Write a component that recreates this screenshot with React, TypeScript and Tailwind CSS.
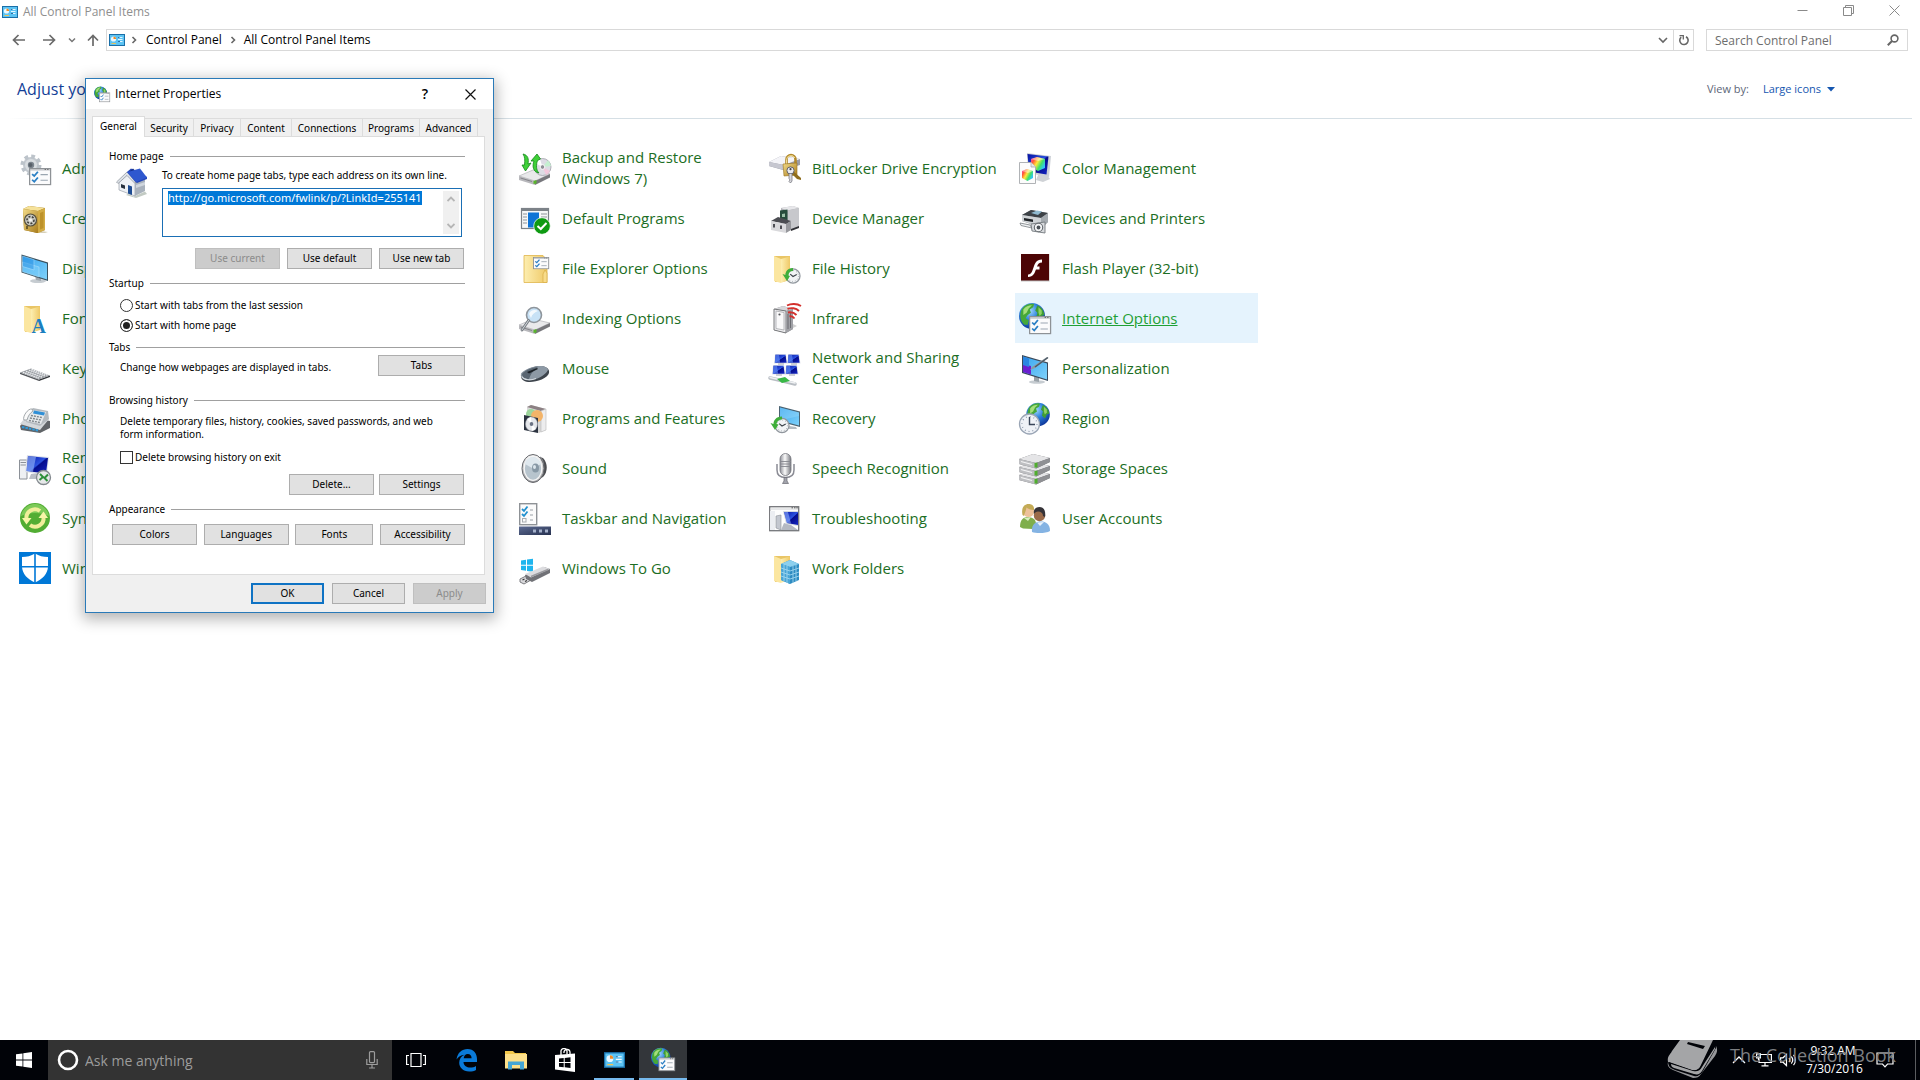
import { useEffect, useRef } from "react";
import type { ReactNode } from "react";

/* ---------- shared gradients ---------- */

function Gradients() {
  return (
    <svg width="0" height="0" className="absolute" aria-hidden="true">
      <defs>
        <linearGradient id="folder" x1="0" y1="0" x2="1" y2="0">
          <stop offset="0" stopColor="#fdeeb0" />
          <stop offset="1" stopColor="#efc967" />
        </linearGradient>
        <linearGradient id="screen" x1="0" y1="0" x2="1" y2="1">
          <stop offset="0" stopColor="#38a4ee" />
          <stop offset="1" stopColor="#7fd2fb" />
        </linearGradient>
        <linearGradient id="navy" x1="0" y1="0" x2="1" y2="1">
          <stop offset="0" stopColor="#0510a0" />
          <stop offset="0.5" stopColor="#2b52e0" />
          <stop offset="0.55" stopColor="#040c8c" />
          <stop offset="1" stopColor="#1526c4" />
        </linearGradient>
        <radialGradient id="globe" cx="0.4" cy="0.3" r="0.75">
          <stop offset="0" stopColor="#a9dcff" />
          <stop offset="0.45" stopColor="#2f83dc" />
          <stop offset="1" stopColor="#0a2f94" />
        </radialGradient>
        <linearGradient id="metal" x1="0" y1="0" x2="0" y2="1">
          <stop offset="0" stopColor="#f4f4f4" />
          <stop offset="1" stopColor="#9b9b9f" />
        </linearGradient>
        <linearGradient id="steel" x1="0" y1="0" x2="1" y2="0">
          <stop offset="0" stopColor="#8f9098" />
          <stop offset="0.45" stopColor="#fafafa" />
          <stop offset="1" stopColor="#77787f" />
        </linearGradient>
        <linearGradient id="gold" x1="0" y1="0" x2="1" y2="1">
          <stop offset="0" stopColor="#f3dc8a" />
          <stop offset="1" stopColor="#a97c1c" />
        </linearGradient>
        <linearGradient id="rainbow" x1="0" y1="0" x2="1" y2="0.6">
          <stop offset="0" stopColor="#ff3bd0" />
          <stop offset="0.25" stopColor="#ff5a36" />
          <stop offset="0.5" stopColor="#ffe83a" />
          <stop offset="0.75" stopColor="#3fe06a" />
          <stop offset="1" stopColor="#2fc4ff" />
        </linearGradient>
        <linearGradient id="bar" x1="0" y1="0" x2="1" y2="1">
          <stop offset="0" stopColor="#5d6c93" />
          <stop offset="1" stopColor="#26304f" />
        </linearGradient>
      </defs>
    </svg>
  );
}

/* ---------- icon building blocks ---------- */

function Svg({ children, size = "size-8" }: { children: ReactNode; size?: string }) {
  return (
    <svg viewBox="0 0 32 32" className={`${size} shrink-0 overflow-visible`} aria-hidden="true">
      {children}
    </svg>
  );
}

function Globe({ cx, cy, r }: { cx: number; cy: number; r: number }) {
  return (
    <g transform={`translate(${cx} ${cy}) scale(${r / 12})`}>
      <circle r="12" fill="url(#globe)" />
      <path d="M-9 -7C-6 -11 -1 -12 2 -11L1 -8L-2 -6L-1 -3L-4 -1L-6 2L-3 4L-4 8L-7 8C-11 5 -12 -2 -9 -7Z" fill="#46a838" />
      <path d="M-8 -6C-6 -9 -3 -10 0 -10L-3 -7L-5 -3L-8 -1Z" fill="#a5df7c" />
      <path d="M5 -10C9 -8 11 -5 11.5 -1L9 0L7 4L4 1L5 -3L3 -5Z" fill="#3f9c35" />
      <path d="M6 -8L9 -5L9 -2L7 0L6 -3Z" fill="#8fd264" />
    </g>
  );
}

function CheckSheet({ x, y, w = 21, h = 18 }: { x: number; y: number; w?: number; h?: number }) {
  return (
    <g transform={`translate(${x} ${y}) scale(${w / 21} ${h / 18})`}>
      <rect x="0.6" y="0.6" width="20" height="17" fill="#fbfbfc" stroke="#8e9296" strokeWidth="1.2" />
      <path d="M1 2H20" stroke="#a9adb1" strokeWidth="1" />
      <path d="M15 1.6h1M17.500 1.600h1" stroke="#555" />
      <path d="M3 6.500L5 8.500L8.500 4M3 12.500L5 14.500L8.500 10" fill="none" stroke="#2a7fc4" strokeWidth="1.700" />
      <path d="M11 7H18M11 13H18" stroke="#9ba6b1" strokeWidth="1.200" />
    </g>
  );
}

function OpenFolder() {
  return (
    <g>
      <path d="M5 4H21V28L14 30H6Z" fill="#e9c566" />
      <path d="M5 4L12 7V31L5 29Z" fill="#fbe6a0" />
      <path d="M12 7L21 4.500V27L12 31Z" fill="url(#folder)" />
    </g>
  );
}

function Clock({ cx, cy, r }: { cx: number; cy: number; r: number }) {
  return (
    <g transform={`translate(${cx} ${cy}) scale(${r / 8})`}>
      <circle r="7.500" fill="#f2f4f6" stroke="#90969d" strokeWidth="1.300" />
      <circle r="5.800" fill="none" stroke="#8b9299" strokeWidth="1" strokeDasharray="0.800 2.200" />
      <path d="M-3 -2L0 0.500L4 -1.500" fill="none" stroke="#3c4249" strokeWidth="1.200" />
    </g>
  );
}

function Drive({ y = 0 }: { y?: number }) {
  return (
    <g transform={`translate(0 ${y})`}>
      <path d="M0 24L14 18L31 22L16 29Z" fill="#e9e9eb" stroke="#a8a8ac" strokeWidth="0.600" />
      <path d="M0 24L16 29V33L0 28Z" fill="#b8b8bc" />
      <path d="M16 29L31 22V25.500L16 33Z" fill="#77777c" />
      <path d="M1.500 26L13 29.500" stroke="#85858a" strokeWidth="1" />
      <path d="M14.500 29L17.500 28V31.500L14.500 32Z" fill="#58b52a" />
    </g>
  );
}

function MiniMonitor({ x, y }: { x: number; y: number }) {
  return (
    <g transform={`translate(${x} ${y})`}>
      <path d="M1 0H12L13.500 9.500H0Z" fill="#dfe2ea" />
      <path d="M1.500 0.800H11.500L12.600 8.700H0.800Z" fill="url(#navy)" />
      <path d="M1.500 0.800L5 0.800L6 8.700H0.800Z" fill="#5b86f2" opacity="0.700" />
      <path d="M4 10H10" stroke="#b9bcc5" strokeWidth="1.400" />
    </g>
  );
}

/* ---------- control panel item icons ---------- */

const icons: Record<string, ReactNode> = {
  admin: (
    <Svg>
      <g transform="translate(12 13)">
        <circle r="8" fill="#c3c9cf" />
        <circle r="8.500" fill="none" stroke="#bcc3ca" strokeWidth="4" strokeDasharray="3.600 3.070" />
        <circle r="6" fill="#d9dde1" />
        <circle r="3.200" fill="#7b848d" />
        <circle cx="-0.500" r="2" fill="#586069" />
      </g>
      <CheckSheet x={10} y={16} w={22} h={17} />
    </Svg>
  ),
  credential: (
    <Svg>
      <path d="M22 29L29 30L26 31H18Z" fill="#d6cfb8" />
      <path d="M4 7L10 4L26 6V28L18 31L5 28Z" fill="#9a7216" />
      <path d="M4 7L10 4L26 6L19 9Z" fill="#f6e29a" />
      <path d="M4 7L19 9V31L5 28Z" fill="url(#gold)" />
      <path d="M19 9L26 6V28L19 31Z" fill="#d3ac45" />
      <path d="M21 11L24.500 9.500V26L21 27.500Z" fill="#bd922b" />
      <circle cx="11.500" cy="18" r="6" fill="#c9c9c2" stroke="#55503e" strokeWidth="1.200" />
      <circle cx="11.500" cy="18" r="3.500" fill="none" stroke="#3d3d3a" strokeWidth="1.500" strokeDasharray="2 1.500" />
      <circle cx="11.500" cy="18" r="1.500" fill="#f7f7f4" />
      <path d="M8 24V27" stroke="#52451e" strokeWidth="1.500" />
    </Svg>
  ),
  display: (
    <Svg>
      <ellipse cx="19" cy="29" rx="8" ry="2" fill="#c6ccd1" />
      <path d="M16 24L22 26V29L17 28Z" fill="#a2aab1" />
      <path d="M2.500 2.500L29 10.500V29L2.500 20.500Z" fill="#39515f" />
      <path d="M3.500 4L28 11.500V27.500L3.500 19.700Z" fill="url(#screen)" />
      <path d="M3.500 10L20 15V25L3.500 19.700Z" fill="#7fd0fb" opacity="0.550" stroke="#c9edff" strokeWidth="0.800" />
      <path d="M3.500 4L15 7.500V18L3.500 14.500Z" fill="#2f94e4" opacity="0.500" stroke="#bfe6ff" strokeWidth="0.800" />
    </Svg>
  ),
  fonts: (
    <Svg>
      <OpenFolder />
      <text x="12.500" y="30.500" fontSize="20" fontWeight="700" fontFamily="'Liberation Serif', serif" fill="#1b7fc0">
        A
      </text>
    </Svg>
  ),
  keyboard: (
    <Svg>
      <path d="M1 20.500L20 27.500V29L1 22Z" fill="#55585c" />
      <path d="M20 27.500L31 23.500V25L20 29Z" fill="#33363a" />
      <path d="M1 20.500L12 16.500L31 23.500L20 27.500Z" fill="#9a9ea3" />
      <path d="M4 20.300L20.500 26.300M7 19.300L23.500 25.200M10 18.200L26.500 24.200M12.500 17.300L29 23.300" stroke="#eceef0" strokeWidth="1.300" strokeDasharray="1.600 0.600" />
    </Svg>
  ),
  phone: (
    <Svg>
      <path d="M1 24L9 14L31 19V26L21 31L2 28Z" fill="#606468" />
      <path d="M1 22L9 12L30 17L21 28Z" fill="#d4d8db" />
      <path d="M9 10L14 6L29 9L30 17L21 24L7 20Z" fill="#b4babf" />
      <path d="M12 8L27 10L22 22L7 19Z" fill="#e4e8ea" />
      <path d="M15 8.500L26 10.500L25 13.500L14 11.500Z" fill="#2f8fd6" />
      <path d="M12 13.500L23 15.500M11 16L22 18M10 18.500L21 20.500" stroke="#7d8489" strokeWidth="1.400" strokeDasharray="2 1" />
      <path d="M5 18C3 15 9 6 13 7L14 9C11 11 9 14 8 18Z" fill="#fafafa" stroke="#8e9499" strokeWidth="0.800" />
      <path d="M3 25L19 28.500" stroke="#2f9bdc" strokeWidth="2.200" strokeDasharray="2.500 1" />
    </Svg>
  ),
  remote: (
    <Svg>
      <path d="M0.500 8H8V27H0.500Z" fill="#eef0f3" stroke="#8c9198" strokeWidth="1" />
      <path d="M1.500 10.500H7M1.500 13H7" stroke="#8c9198" />
      <path d="M12 22L18 21L19 27L10 27Z" fill="#b9bec7" />
      <path d="M8 3L30 5L28 23L6 20Z" fill="#dfe3ea" />
      <path d="M9 4L29 6L27 21.500L7.500 19Z" fill="url(#navy)" />
      <path d="M9 4L17 5L14 19.800L7.500 19Z" fill="#8fb0f8" opacity="0.650" />
      <circle cx="24.500" cy="25.500" r="7" fill="#e6e8e9" stroke="#83898e" strokeWidth="1.300" />
      <path d="M21 22L24 25L20.500 28M29 22.500L25.500 26L28.500 29" fill="none" stroke="#2f8f3a" strokeWidth="2" />
    </Svg>
  ),
  sync: (
    <Svg>
      <circle cx="16" cy="16" r="15" fill="#52ad33" />
      <path d="M2 14C4 5 11 2 16 2S28 5 30 14C22 10 10 10 2 14Z" fill="#7cca58" />
      <path d="M7.500 17A8.500 8.500 0 0 1 21 9" fill="none" stroke="#f0ee9a" strokeWidth="4" />
      <path d="M24.500 15A8.500 8.500 0 0 1 11 23" fill="none" stroke="#f0ee9a" strokeWidth="4" />
      <path d="M3 16H12.500L7.500 22.500Z" fill="#f7f5a8" />
      <path d="M19.500 16H29L24.500 9.500Z" fill="#f7f5a8" />
    </Svg>
  ),
  defender: (
    <Svg>
      <rect width="32" height="32" fill="#0078d7" />
      <path d="M16 1.500C12 4 8 5 3 5V14C3 22 9 27.500 16 30.500C23 27.500 29 22 29 14V5C24 5 20 4 16 1.500Z" fill="#fff" />
      <path d="M16 1V31M2 14.800H30" stroke="#0078d7" strokeWidth="1.600" />
    </Svg>
  ),
  backup: (
    <Svg>
      <Drive />
      <circle cx="23.500" cy="15" r="8.500" fill="#dcdce4" stroke="#9fa0a8" strokeWidth="0.800" />
      <path d="M23.500 15L16 11A8.500 8.500 0 0 1 21 7Z" fill="#fff" />
      <path d="M23.500 15L31 19A8.500 8.500 0 0 1 27 23Z" fill="#f2c8dc" />
      <path d="M23.500 15L32 14A8.500 8.500 0 0 0 29 8.500Z" fill="#c4f0d0" />
      <circle cx="23.500" cy="15" r="2.300" fill="#8e8f96" stroke="#fff" strokeWidth="0.900" />
      <path d="M4 2C9 3 10 7 9 12L12 11L6.500 19L3 13L5.500 13C6 8 6 5 4 2Z" fill="#3fd038" stroke="#14861a" strokeWidth="0.800" />
      <path d="M20 21C14 20 13 14 15 9L12 9L18 2L21.500 7L18.500 8.500C17 13 17 18 20 21Z" fill="#3fd038" stroke="#14861a" strokeWidth="0.800" />
    </Svg>
  ),
  defaults: (
    <Svg>
      <rect x="2.500" y="6.500" width="27" height="20" fill="#f6f7f8" stroke="#7c8288" strokeWidth="1.200" />
      <path d="M2.500 8H29.500" stroke="#7c8288" strokeWidth="2" />
      <path d="M4 12H8M4 15H8M4 18H8M4 21H8M22 12H28M22 15H28" stroke="#8d9399" strokeWidth="1" />
      <rect x="9" y="10.500" width="11" height="15" fill="#0f74d6" />
      <circle cx="23" cy="24" r="8.300" fill="#0e9a12" stroke="#fff" strokeWidth="0.700" />
      <path d="M18.500 24L21.800 27L27.500 21" fill="none" stroke="#fff" strokeWidth="2" />
    </Svg>
  ),
  explorerOptions: (
    <Svg>
      <path d="M5 3.500H24L28 8V30.500H5Z" fill="url(#folder)" stroke="#dfb54b" strokeWidth="0.800" />
      <path d="M24 30.500V22L26 18L28 21V30.500Z" fill="#f8dc8b" stroke="#d9ad45" strokeWidth="0.700" />
      <CheckSheet x={14} y={5} w={16} h={12} />
    </Svg>
  ),
  indexing: (
    <Svg>
      <Drive y={-1} />
      <circle cx="15" cy="13" r="7.500" fill="#c8e2f6" stroke="#8e959c" strokeWidth="1.600" />
      <path d="M10 12C11 8 16 7 19 9C16 10 13 12 12 16Z" fill="#fff" opacity="0.800" />
      <path d="M9.500 18.500L3 28" stroke="#777d84" strokeWidth="2.800" strokeLinecap="round" />
      <path d="M9.500 18.500L3 28" stroke="#d3d7da" strokeWidth="1" strokeLinecap="round" />
    </Svg>
  ),
  mouse: (
    <Svg>
      <path d="M2 24C1 20 14 14 21 14C27 14 31 17 30 21C29 26 18 30 11 30C6 30 2 28 2 24Z" fill="#3d444c" />
      <path d="M2 23C1 19 14 14 21 14C26 14 29 16 29 18C26 24 17 28 11 28C6 28 2 26 2 23Z" fill="#8d99a5" />
      <path d="M3 22C6 18 14 15 19 15C15 18 12 21 10 27C6 27 3 25 3 22Z" fill="#5a6672" />
      <path d="M8 20L18 16L19 17L10 21.500Z" fill="#1c2228" />
      <path d="M2.500 24.500C5 28.500 12 28.500 17 26.500" fill="none" stroke="#d6dce1" strokeWidth="1.200" />
    </Svg>
  ),
  programs: (
    <Svg>
      <path d="M8 5L12 3L27 7V28L20 31L8 28Z" fill="#d8d8d8" />
      <path d="M8 5L12 3L27 7L22 9Z" fill="#8c8083" />
      <path d="M22 9L27 7V28L22 30Z" fill="#ededee" stroke="#bbb" strokeWidth="0.600" />
      <circle cx="12" cy="12" r="5" fill="#9dd69c" />
      <circle cx="18" cy="14" r="6" fill="#f3b469" />
      <path d="M5 13L19 16V31L5 28Z" fill="#2c3340" />
      <ellipse cx="12.500" cy="22" rx="6" ry="7" fill="#e6e8ec" stroke="#9da1aa" strokeWidth="0.600" />
      <path d="M12.500 22L8 17L12 15ZM12.500 22L17 27L13 29Z" fill="#fff" />
      <ellipse cx="12.500" cy="22" rx="1.800" ry="2.100" fill="#6b7383" />
    </Svg>
  ),
  sound: (
    <Svg>
      <path d="M13 3L24 6C29 11 29 20 24 25L14 30Z" fill="#4b4c50" />
      <path d="M21 5C26 10 26 20 21 26" fill="none" stroke="#7c7e83" strokeWidth="1.200" />
      <ellipse cx="14" cy="16.500" rx="11" ry="14" fill="url(#metal)" stroke="#66686c" strokeWidth="1" />
      <ellipse cx="14" cy="16.500" rx="8.800" ry="11.800" fill="#b7c4cd" stroke="#f5f5f5" strokeWidth="1.300" />
      <path d="M14 16.500L6 12C7 7 10 5 14 5C18 5 21 8 22 12Z" fill="#dfe8ee" />
      <ellipse cx="16.500" cy="16" rx="3.500" ry="4.500" fill="#8798a5" />
      <ellipse cx="15.500" cy="15" rx="1.500" ry="2" fill="#dbe5ec" />
    </Svg>
  ),
  taskbar: (
    <Svg>
      <rect x="0.700" y="1.700" width="17" height="21" fill="#fbfbfb" stroke="#8e9296" strokeWidth="1.400" />
      <path d="M3 7L5 9L8.500 4.500M3 12L5 14L8.500 9.500" fill="none" stroke="#2391cf" strokeWidth="1.800" />
      <rect x="3.500" y="16.500" width="3.500" height="3.500" fill="none" stroke="#a9adb1" />
      <path d="M11 8H14M11 13H14M11 18H14" stroke="#9ba1a7" />
      <rect y="24.500" width="32" height="8.500" fill="url(#bar)" />
      <path d="M14 27.500h3v3h-3zM20 27.500h3v3h-3zM26 27.500h3v3h-3z" fill="#a5b1cb" />
    </Svg>
  ),
  togo: (
    <Svg>
      <path d="M2 8.500L7 7.800V12.700H2ZM8 7.600L14 6.700V12.700H8ZM2 13.700H7V18.700L2 18ZM8 13.700H14V19.700L8 18.900Z" fill="#1fb5ee" />
      <path d="M1 27L7 24L12 28L5 32L1 30Z" fill="#d9d9dc" stroke="#6f7074" strokeWidth="0.900" />
      <path d="M3.500 28L5.500 27M6 29.500L8 28.500" stroke="#333" strokeWidth="1.200" />
      <path d="M6 23L25 15L31 17V21L13 30L7 27Z" fill="#717277" />
      <path d="M6 22L24 14.500L31 17L12 25.500Z" fill="#dcdcdf" />
      <path d="M12 24.500L29 17.500" stroke="#9a9a9f" strokeWidth="1.500" />
    </Svg>
  ),
  bitlocker: (
    <Svg>
      <path d="M0 10L12 4L31 7V13L14 18L0 14Z" fill="#9b9ca6" />
      <path d="M0 10L12 4L31 7L15 13Z" fill="#f4f4f8" />
      <path d="M0 10L15 13V18L0 14Z" fill="#c6c7d0" />
      <path d="M17.500 12V7.500A4.500 4.500 0 0 1 26.500 7.500V12" fill="none" stroke="#b2892c" strokeWidth="2.600" />
      <path d="M17.500 12V7.500A4.500 4.500 0 0 1 26 6" fill="none" stroke="#f0dc94" strokeWidth="1" />
      <path d="M14 12L28 11V23L15 24Z" fill="url(#gold)" stroke="#98701c" strokeWidth="0.600" />
      <path d="M24 19L32 26V28L28 27L23 22Z" fill="#8e6c1c" />
      <circle cx="21.500" cy="18.500" r="3.600" fill="#ececf0" stroke="#62636a" strokeWidth="1" />
      <circle cx="21.500" cy="17.200" r="1.100" fill="#45464c" />
      <path d="M20 21.500H23V29L21.500 31L20 29.500L21 28L20 26.500Z" fill="#d8d8dd" stroke="#6a6b72" strokeWidth="0.700" />
    </Svg>
  ),
  device: (
    <Svg>
      <path d="M12 6L24 4L30 6V25L16 30L12 25Z" fill="#b1b2b7" />
      <path d="M12 6L24 4L30 6L18 8.500Z" fill="#e7e7ea" />
      <path d="M19 8.500L30 6V25L19 28Z" fill="#c7c8cc" />
      <path d="M22 27L30 24V26L22 29Z" fill="#303136" />
      <path d="M11 8.500L18.500 7.500V19L11 18Z" fill="#274d3c" />
      <path d="M13 12L16 11.500V15L13 15Z" fill="#9cc0a8" />
      <path d="M2 19L9 15L22 19L17 22Z" fill="#4b4c52" />
      <path d="M2 19L17 22V31L2 28Z" fill="#d9d9dc" />
      <path d="M17 22L22 19V28L17 31Z" fill="#96979c" />
      <path d="M5 22V25.500M12 23.500V27" stroke="#4d4e54" strokeWidth="2" />
    </Svg>
  ),
  history: (
    <Svg>
      <OpenFolder />
      <Clock cx={24} cy={24} r={7.500} />
      <path d="M24 16C18 16 16.500 20 16.500 23L13.500 22L18 29L21 24L19.500 23.500C19.500 21 21 19 24 19Z" fill="#3fae3a" />
    </Svg>
  ),
  infrared: (
    <Svg>
      <path d="M22 27L28 24L24 22Z" fill="#d0d0d0" />
      <path d="M5 7L14 4L24 7V27L17 31L5 28Z" fill="#85868a" />
      <path d="M5 7L14 4L24 7L17 9Z" fill="#d7d7da" />
      <path d="M5 7L17 9V31L5 28Z" fill="#ececee" stroke="#6c6d71" strokeWidth="0.900" />
      <path d="M7 9L15 10.500V28L7 26.500Z" fill="#f9f9fa" stroke="#a7a8ac" strokeWidth="0.800" />
      <path d="M17 9L24 7V27L17 31Z" fill="#a0a1a6" />
      <path d="M19 27V12M21.500 26V11" stroke="#6c6d72" />
      <circle cx="10.500" cy="12.500" r="1.100" fill="#57585c" />
      <path d="M18 3.500C22 1.500 28 1.500 32 4M18.500 7C22 5.500 27 6 30 9M19 10.500C22 10 25 10.500 27.500 13M20.500 14.500C22 14 24 14.500 25.500 16.500" fill="none" stroke="#d3302c" strokeWidth="1.900" />
    </Svg>
  ),
  network: (
    <Svg>
      <MiniMonitor x={5} y={2} />
      <MiniMonitor x={18} y={2} />
      <MiniMonitor x={3} y={13} />
      <MiniMonitor x={16} y={13} />
      <path d="M1 26L12 28.500L26 32" stroke="#b9bec4" strokeWidth="3.500" strokeLinecap="round" />
      <path d="M1 25.500L12 28L26 31" stroke="#eff1f3" strokeWidth="1.400" strokeLinecap="round" />
      <path d="M8 27L16 25L21 29L13 31Z" fill="#39b846" />
    </Svg>
  ),
  recovery: (
    <Svg>
      <path d="M20 24L27 25L28 27H19Z" fill="#b5bcc2" />
      <path d="M10 4L31 9.500V25L10 19.500Z" fill="#4b6372" />
      <path d="M11 5.500L30 10.500V23.500L11 18.500Z" fill="url(#screen)" />
      <path d="M11 5.500L30 10.500V14L11 18.500Z" fill="#a6dffb" opacity="0.350" />
      <Clock cx={13} cy={23.500} r={7.500} />
      <path d="M13 14.500C6.500 14.500 4.500 19 4.500 22L1.500 21L6 28L9.500 22.500L7.500 22C8 19 10 17.500 13 17.500Z" fill="#3fae3a" />
    </Svg>
  ),
  speech: (
    <Svg>
      <path d="M8 12V18C8 23 11 25.500 16.500 25.500S25 23 25 18V12" fill="none" stroke="#8b8c95" strokeWidth="1.500" />
      <rect x="11" y="1.500" width="11" height="22" rx="5.500" fill="url(#steel)" stroke="#75767e" strokeWidth="0.800" />
      <path d="M11 9.500H22M11 12H22M11 14.500H22" stroke="#86878f" strokeWidth="0.900" />
      <path d="M15 25.500H18V29L19.500 31.500H13.500L15 29Z" fill="#a3a4ac" stroke="#696a72" strokeWidth="0.700" />
    </Svg>
  ),
  troubleshooting: (
    <Svg>
      <rect x="0.700" y="4.700" width="29" height="24" fill="#fdfdfd" stroke="#74767a" strokeWidth="1.300" />
      <path d="M1 7H29" stroke="#d0d2d5" />
      <path d="M22.500 5.800h1.500M25 5.800h1.500M27.300 5.800h1.500" stroke="#555" />
      <path d="M1 9H6V28H1Z" fill="#eceef2" />
      <path d="M7 14L12 13V28L7 26Z" fill="#c3c7cf" stroke="#8b9099" strokeWidth="0.600" />
      <path d="M15 21L22 23L29 28H12Z" fill="#b4b9c2" />
      <path d="M14 9H29V24L17 22Z" fill="#d5dae2" />
      <path d="M15 10H29V23L18 21Z" fill="url(#navy)" />
      <path d="M15 10L19 10L22 21.500L18 21Z" fill="#7d9cf5" opacity="0.700" />
    </Svg>
  ),
  work: (
    <Svg>
      <OpenFolder />
      <path d="M12 12L21 8L30 12V28L21 32L12 28Z" fill="#2f8cc2" />
      <path d="M12 12L21 8L30 12L21 15Z" fill="#8dd0ee" />
      <path d="M12 12L21 15V32L12 28Z" fill="#49a5d6" />
      <path d="M12 16L21 19L30 16M12 20L21 23L30 20M12 24L21 27L30 24M15 13V29.500M18 14V31M24 14V31M27 13V29.500" fill="none" stroke="#a8dcf3" strokeWidth="0.800" />
    </Svg>
  ),
  color: (
    <Svg>
      <path d="M19 23H28L31 27L24 30L17 28Z" fill="#cfd2d6" />
      <path d="M8 1L32 4L30 25L9 21Z" fill="#cdd1d7" />
      <path d="M8.500 2L29.500 4.500L27.500 22.500L10 19.500Z" fill="url(#navy)" />
      <path d="M12 7L18 5L26 7V16L19 19L12 15Z" fill="url(#rainbow)" />
      <path d="M12 7L18 5L26 7L19 9Z" fill="#fff" opacity="0.450" />
      <path d="M0.500 10.500H12L16.500 15V31.500H0.500Z" fill="#fcfcfc" stroke="#a7aaae" strokeWidth="0.900" />
      <path d="M12 10.500V15H16.500" fill="#e5e7e9" stroke="#a7aaae" strokeWidth="0.800" />
      <path d="M3 19L8 17L14 19V26L8.500 29L3 26Z" fill="url(#rainbow)" />
      <path d="M3 19L8 17L14 19L9 21Z" fill="#fff" opacity="0.450" />
    </Svg>
  ),
  printers: (
    <Svg>
      <path d="M3 13L12 8L29 11V20L23 26L3 19Z" fill="#8f959a" />
      <path d="M3 13L12 8L29 11L22 16Z" fill="#3c4146" />
      <path d="M12 11L18 8.500L23 9.500L19 13Z" fill="#8fb9cf" />
      <path d="M3 13L22 16V25L3 19Z" fill="#cfd3d6" />
      <path d="M5 16L14 17.500V20L5 18.500Z" fill="#22262a" />
      <path d="M1 21L11 23L13 26L2 23.500Z" fill="#eef0f2" stroke="#777d82" strokeWidth="0.800" />
      <path d="M22 16L29 11V20L22 25Z" fill="#a5abb0" />
      <path d="M12 22L26 20V31L13 29Z" fill="#d7dadd" stroke="#74797e" strokeWidth="0.900" />
      <circle cx="19.500" cy="25.500" r="4.200" fill="#f4f5f6" stroke="#666b70" strokeWidth="1.100" />
      <circle cx="19.500" cy="25.500" r="1.900" fill="#4a5056" />
    </Svg>
  ),
  flash: (
    <Svg>
      <rect x="2" y="2" width="28.500" height="27.500" fill="#8c8c8c" opacity="0.500" />
      <rect x="2" y="2" width="28" height="26.500" fill="#4c0405" />
      <path d="M23 7.500C17 7.500 16 11.500 14.500 15.500C13 20 12 22.500 9 22.500V25C14.500 25 15.500 21 17 17.500H20.500V14.500H18C19 12 20 10.500 23 10.500Z" fill="#fff" />
    </Svg>
  ),
  internet: (
    <Svg>
      <Globe cx={13} cy={14} r={13} />
      <CheckSheet x={10} y={14} w={22} h={18} />
    </Svg>
  ),
  personalization: (
    <Svg>
      <ellipse cx="18" cy="30" rx="8" ry="1.800" fill="#c6ccd1" />
      <path d="M15 24L20 26V30L15 29Z" fill="#9aa2a9" />
      <path d="M3 3L29 10.500V29L3 21Z" fill="#3b4a5b" />
      <path d="M4 4.500L28 11.500V27.500L4 20Z" fill="url(#screen)" />
      <path d="M4 12L12 14V22.500L4 20Z" fill="#6b1fd0" />
      <path d="M4 4.500L10 6.500L10 15L4 13Z" fill="#2a86e2" />
      <path d="M29 6L16 16L11 18L13 15L28 5Z" fill="#8d98a2" />
      <path d="M29 5.500L16 15" stroke="#4d5964" strokeWidth="1.500" />
    </Svg>
  ),
  region: (
    <Svg>
      <Globe cx={19} cy={12.500} r={11.800} />
      <circle cx="10.500" cy="22" r="10" fill="#eff2f7" stroke="#9aa5b5" strokeWidth="1.300" />
      <circle cx="10.500" cy="22" r="7.500" fill="none" stroke="#76849a" strokeWidth="1.200" strokeDasharray="0.800 3.130" />
      <path d="M10.500 15V22.500H16" fill="none" stroke="#39465a" strokeWidth="1.400" />
    </Svg>
  ),
  storage: (
    <Svg>
      {[21, 13, 5].map((y) => (
        <g key={y} transform={`translate(0 ${y})`}>
          <path d="M0 2L14 -3L31 1V5L17 11.500L0 7Z" fill="#707175" />
          <path d="M0 2L14 -3L31 1L17 6Z" fill="#e5e5e7" />
          <path d="M0 2L17 6V11.500L0 7Z" fill="#bebfc2" />
          <path d="M2 4.500L13 7.500" stroke="#f4f4f5" strokeWidth="1.200" />
          <path d="M17 6L31 1V5L17 11.500Z" fill="#8f9094" />
          <path d="M15.500 6L18.500 5.500V10.300L15.500 10.700Z" fill="#4fae2d" />
        </g>
      ))}
    </Svg>
  ),
  users: (
    <Svg>
      <path d="M1 25C1 17 5 15 9 15S17 17 17 22L14 27L4 26.500Z" fill="#7fae4c" />
      <path d="M5 16L9 19L12 15Z" fill="#d9eec0" />
      <circle cx="9.500" cy="9.500" r="5.600" fill="#edc19a" />
      <path d="M3.500 13C2 6 5 2 9.500 2C14 2 15.500 5 15 8C12 8 9 7 7.500 5.500C7 9 5.500 11 5 14Z" fill="#c4ab57" />
      <path d="M13 30C12 22 17 19.500 22 19.500S31 22 31 29C27 31.500 17 31.500 13 30Z" fill="#84b3e3" />
      <path d="M18 20.500L21 24L25 20Z" fill="#e6f1fb" />
      <circle cx="20.500" cy="13.500" r="5.700" fill="#9b6b4a" />
      <path d="M15 12C14 7 17 5 20.500 5C25 5 27 9 26 15L24 14C24 11 22 9.500 19 9.500C17 9.500 16 10.500 15 12Z" fill="#363338" />
    </Svg>
  ),
};

function ControlPanelGlyph({ className }: { className: string }) {
  return (
    <svg viewBox="0 0 16 12" className={`${className} shrink-0`} aria-hidden="true">
      <rect x="0.500" y="0.500" width="15" height="11" fill="#5cc3f3" stroke="#1a6fa8" />
      <circle cx="4.500" cy="5" r="2.600" fill="#e9f7ff" />
      <path d="M4.500 5V2.400A2.600 2.600 0 0 1 7.100 5Z" fill="#f08a24" />
      <path d="M9 3.500H13.500M9 5.500H13.500M9 7.500H13.500" stroke="#f3fbff" strokeWidth="0.900" />
      <path d="M9 3.500H10.500M9 7.500H11" stroke="#1c5f96" strokeWidth="0.900" />
      <path d="M2.500 9.500H7" stroke="#f7c24c" strokeWidth="0.900" />
    </svg>
  );
}

function HouseIcon() {
  return (
    <svg viewBox="0 0 32 30" className="h-[30px] w-8 shrink-0" aria-hidden="true">
      <path d="M12 26L18 28.500L29 23.500L31 26L20 30L10 27Z" fill="#9aa79b" opacity="0.600" />
      <path d="M3 14L11 7L19 14V28L3 22Z" fill="#eef1f5" stroke="#8a929c" strokeWidth="0.600" />
      <path d="M19 14L29 11V23L19 28Z" fill="#a8b1bc" />
      <path d="M20 17L29 14V17L20 20Z" fill="#cfd6dd" />
      <path d="M0.500 14L11 4L20 14.500L18.500 15L11 7.500L2 15.500Z" fill="#dfe4ea" stroke="#7a828c" strokeWidth="0.600" />
      <path d="M11 4L15 0.500L31 9L31 11L21 15L19.500 14Z" fill="#2547b8" />
      <path d="M11 4L24 0.500L31 9.500L20 14Z" fill="#2f58cf" />
      <path d="M13.500 3.500L17 0.500L18.500 2Z" fill="#16308e" />
      <path d="M5 16L9 17.500V21L5 19.500Z" fill="#26303d" />
      <path d="M12 17L16 18.500V27L12 25.500Z" fill="#1e4c92" />
    </svg>
  );
}

/* ---------- control panel ---------- */

type Item = { name: string; icon: string; active?: boolean };

const columns: Item[][] = [
  [
    { name: "Administrative Tools", icon: "admin" },
    { name: "Credential Manager", icon: "credential" },
    { name: "Display", icon: "display" },
    { name: "Fonts", icon: "fonts" },
    { name: "Keyboard", icon: "keyboard" },
    { name: "Phone and Modem", icon: "phone" },
    { name: "RemoteApp and Desktop Connections", icon: "remote" },
    { name: "Sync Center", icon: "sync" },
    { name: "Windows Defender", icon: "defender" },
  ],
  [],
  [
    { name: "Backup and Restore (Windows 7)", icon: "backup" },
    { name: "Default Programs", icon: "defaults" },
    { name: "File Explorer Options", icon: "explorerOptions" },
    { name: "Indexing Options", icon: "indexing" },
    { name: "Mouse", icon: "mouse" },
    { name: "Programs and Features", icon: "programs" },
    { name: "Sound", icon: "sound" },
    { name: "Taskbar and Navigation", icon: "taskbar" },
    { name: "Windows To Go", icon: "togo" },
  ],
  [
    { name: "BitLocker Drive Encryption", icon: "bitlocker" },
    { name: "Device Manager", icon: "device" },
    { name: "File History", icon: "history" },
    { name: "Infrared", icon: "infrared" },
    { name: "Network and Sharing Center", icon: "network" },
    { name: "Recovery", icon: "recovery" },
    { name: "Speech Recognition", icon: "speech" },
    { name: "Troubleshooting", icon: "troubleshooting" },
    { name: "Work Folders", icon: "work" },
  ],
  [
    { name: "Color Management", icon: "color" },
    { name: "Devices and Printers", icon: "printers" },
    { name: "Flash Player (32-bit)", icon: "flash" },
    { name: "Internet Options", icon: "internet", active: true },
    { name: "Personalization", icon: "personalization" },
    { name: "Region", icon: "region" },
    { name: "Storage Spaces", icon: "storage" },
    { name: "User Accounts", icon: "users" },
  ],
];

function PanelItem({ item }: { item: Item }) {
  return (
    <li>
      <a
        href="#"
        className={`flex h-[50px] w-[243px] items-center gap-[11px] pl-1 text-[15px] leading-[21px] ${
          item.active ? "bg-[#e5f3fd] text-[#1fa035] underline" : "text-[#1c6e24]"
        }`}
      >
        {icons[item.icon]}
        <span>{item.name}</span>
      </a>
    </li>
  );
}

function TitleBar() {
  return (
    <header className="flex h-6 items-center pr-5 pl-0.5 text-xs text-[#8f8f8f]">
      <ControlPanelGlyph className="h-3 w-4" />
      <h1 className="ml-[5px] grow">All Control Panel Items</h1>
      <div className="flex gap-[35px] pb-1">
        <button aria-label="Minimize">
          <svg viewBox="0 0 11 11" className="size-[11px]">
            <path d="M0.500 5.500H10.500" stroke="#8a8a8a" />
          </svg>
        </button>
        <button aria-label="Restore">
          <svg viewBox="0 0 11 11" className="size-[11px]" fill="none" stroke="#8a8a8a">
            <path d="M0.500 2.500H8.500V10.500H0.500ZM2.500 2.500V0.500H10.500V8.500H8.500" />
          </svg>
        </button>
        <button aria-label="Close">
          <svg viewBox="0 0 11 11" className="size-[11px]" stroke="#8a8a8a">
            <path d="M0.500 0.500L10.500 10.500M10.500 0.500L0.500 10.500" />
          </svg>
        </button>
      </div>
    </header>
  );
}

function Chevron({ d }: { d: string }) {
  return (
    <svg viewBox="0 0 10 10" className="size-2.5 shrink-0" fill="none" stroke="#666" strokeWidth="1.600" aria-hidden="true">
      <path d={d} />
    </svg>
  );
}

function NavBar() {
  return (
    <nav className="mt-[5px] flex h-[22px] items-center pr-3 pl-3 text-xs text-black">
      <button aria-label="Back" className="mr-4">
        <svg viewBox="0 0 14 12" className="h-3 w-3.5" fill="none" stroke="#6a6a6a" strokeWidth="1.700">
          <path d="M13 6H1.500M6.500 1L1.500 6L6.500 11" />
        </svg>
      </button>
      <button aria-label="Forward" className="mr-3">
        <svg viewBox="0 0 14 12" className="h-3 w-3.5" fill="none" stroke="#6a6a6a" strokeWidth="1.700">
          <path d="M1 6H12.500M7.500 1L12.500 6L7.500 11" />
        </svg>
      </button>
      <button aria-label="Recent locations" className="mr-[11px]">
        <svg viewBox="0 0 8 8" className="size-2" fill="none" stroke="#777" strokeWidth="1.500">
          <path d="M1 2.500L4 5.500L7 2.500" />
        </svg>
      </button>
      <button aria-label="Up" className="mr-[7px]">
        <svg viewBox="0 0 12 12" className="size-3" fill="none" stroke="#6a6a6a" strokeWidth="1.700">
          <path d="M6 12V1.500M1 6.500L6 1.500L11 6.500" />
        </svg>
      </button>
      <div className="flex h-full grow items-center border border-[#d9d9d9]">
        <ControlPanelGlyph className="ml-0.5 h-3 w-4" />
        <span className="ml-1">
          <Chevron d="M3.500 2L6.500 5L3.500 8" />
        </span>
        <a href="#" className="ml-[7px]">Control Panel</a>
        <span className="ml-1.5">
          <Chevron d="M3.500 2L6.500 5L3.500 8" />
        </span>
        <a href="#" className="ml-1.5 grow">All Control Panel Items</a>
        <button aria-label="Previous locations" className="flex h-full w-5 items-center justify-center">
          <Chevron d="M1 3L5 7L9 3" />
        </button>
        <button aria-label="Refresh" className="flex h-full w-5 items-center justify-center border-l border-[#d9d9d9]">
          <svg viewBox="0 0 12 12" className="size-3" fill="none" stroke="#666" strokeWidth="1.600">
            <path d="M8 2.700A4.200 4.200 0 1 1 3.200 3.200" />
            <path d="M1.500 1.600H5.300V5.500" strokeWidth="1.300" />
          </svg>
        </button>
      </div>
      <label className="ml-3 flex h-full w-[202px] items-center border border-[#d9d9d9] px-2">
        <span className="sr-only">Search</span>
        <input
          type="text"
          placeholder="Search Control Panel"
          className="h-5 w-full min-w-0 outline-none placeholder:text-[#6d6d6d]"
        />
        <svg viewBox="0 0 12 12" className="size-3 shrink-0" fill="none" stroke="#666" strokeWidth="1.600" aria-hidden="true">
          <circle cx="7.500" cy="4.500" r="3.400" />
          <path d="M5 7L0.800 11.200" strokeWidth="2" />
        </svg>
      </label>
    </nav>
  );
}

/* ---------- Internet Properties dialog ---------- */

function GroupTitle({ children }: { children: string }) {
  return (
    <h3 className="flex h-4 items-center gap-1.5 after:h-px after:grow after:bg-[#a0a0a0]">{children}</h3>
  );
}

function DialogButton({
  children,
  width = "w-[85px]",
  disabled,
  primary,
}: {
  children: string;
  width?: string;
  disabled?: boolean;
  primary?: boolean;
}) {
  const tone = disabled
    ? "border border-[#bfbfbf] bg-[#cccccc] text-[#8b8b8b]"
    : primary
      ? "border-2 border-[#0f73c4] bg-[#e1e1e1]"
      : "border border-[#adadad] bg-[#e1e1e1]";
  return (
    <button disabled={disabled} className={`flex h-[21px] items-center justify-center ${width} ${tone}`}>
      {children}
    </button>
  );
}

const tabs = [
  { name: "Security", width: "w-[49px]" },
  { name: "Privacy", width: "w-[47px]" },
  { name: "Content", width: "w-[51px]" },
  { name: "Connections", width: "w-[71px]" },
  { name: "Programs", width: "w-[57px]" },
  { name: "Advanced", width: "w-[58px]" },
];

function InternetProperties() {
  const address = useRef<HTMLTextAreaElement>(null);
  useEffect(() => {
    address.current?.focus();
    address.current?.select();
  }, []);

  return (
    <section
      role="dialog"
      aria-label="Internet Properties"
      className="absolute top-[78px] left-[85px] w-[409px] border border-[#2a7ab8] bg-[#f0f0f0] pb-2 font-['Noto_Sans','Open_Sans',sans-serif] text-[10px] leading-[13px] text-black shadow-[0_4px_14px_2px_rgba(0,0,0,0.3)]"
    >
      <header className="flex h-[30px] items-center bg-white pr-[17px] pl-2 font-['Open_Sans','Noto_Sans',sans-serif] text-xs">
        <Svg size="size-4">
          <Globe cx={13} cy={14} r={13} />
          <CheckSheet x={10} y={13} w={22} h={19} />
        </Svg>
        <h2 className="ml-[5px] grow">Internet Properties</h2>
        <button aria-label="Help" className="mr-[37px] text-sm font-semibold">?</button>
        <button aria-label="Close">
          <svg viewBox="0 0 11 11" className="size-[11px]" stroke="#111" strokeWidth="1.200">
            <path d="M0.500 0.500L10.500 10.500M10.500 0.500L0.500 10.500" />
          </svg>
        </button>
      </header>

      <div className="pt-[7px] pr-2 pl-1.5">
        <div role="tablist" className="-mb-px flex items-end">
          <button
            role="tab"
            aria-selected="true"
            className="relative h-[21px] w-[53px] border border-b-0 border-[#dcdcdc] bg-white pb-0.5"
          >
            General
          </button>
          {tabs.map((tab) => (
            <button
              key={tab.name}
              role="tab"
              aria-selected="false"
              className={`h-[19px] border-t border-r border-b border-[#dcdcdc] pt-px ${tab.width}`}
            >
              {tab.name}
            </button>
          ))}
        </div>

        <div role="tabpanel" className="border border-[#dcdcdc] bg-white pt-[11px] pr-[19px] pb-[29px] pl-4">
          <GroupTitle>Home page</GroupTitle>
          <div className="mt-1 flex gap-3.5 pl-[7px]">
            <HouseIcon />
            <div className="grow">
              <label htmlFor="home-page" className="block h-4 pt-px whitespace-nowrap">
                To create home page tabs, type each address on its own line.
              </label>
              <div className="mt-1 mr-[3px] flex h-[49px] border border-[#1a6fb5] p-0.5">
                <textarea
                  id="home-page"
                  ref={address}
                  defaultValue="http://go.microsoft.com/fwlink/p/?LinkId=255141"
                  className="grow resize-none overflow-hidden pl-[3px] text-[11px] whitespace-nowrap outline-none selection:bg-[#0078d7] selection:text-white"
                />
                <div className="flex w-4 flex-col items-center justify-between bg-[#f0f0f0] py-1">
                  <svg viewBox="0 0 8 8" className="size-2" fill="none" stroke="#b5b5b5" strokeWidth="1.800" aria-hidden="true">
                    <path d="M0.500 6L4 2.500L7.500 6" />
                  </svg>
                  <svg viewBox="0 0 8 8" className="size-2" fill="none" stroke="#b5b5b5" strokeWidth="1.800" aria-hidden="true">
                    <path d="M0.500 2L4 5.500L7.500 2" />
                  </svg>
                </div>
              </div>
            </div>
          </div>
          <div className="mt-[11px] flex justify-end gap-[7px] pr-px">
            <DialogButton disabled>Use current</DialogButton>
            <DialogButton>Use default</DialogButton>
            <DialogButton>Use new tab</DialogButton>
          </div>

          <div className="mt-1.5">
            <GroupTitle>Startup</GroupTitle>
            <label className="mt-1.5 flex h-4 items-center gap-0.5 pl-[11px]">
              <input
                type="radio"
                name="startup"
                className="size-[13px] appearance-none rounded-full border border-[#333] bg-white"
              />
              Start with tabs from the last session
            </label>
            <label className="mt-1 flex h-4 items-center gap-0.5 pl-[11px]">
              <input
                type="radio"
                name="startup"
                defaultChecked
                className="size-[13px] appearance-none rounded-full border border-[#333] bg-white checked:bg-[#222] checked:shadow-[inset_0_0_0_2px_white]"
              />
              Start with home page
            </label>
          </div>

          <div className="mt-1.5">
            <GroupTitle>Tabs</GroupTitle>
            <div className="flex justify-between pl-[11px]">
              <p className="pt-1.5">Change how webpages are displayed in tabs.</p>
              <DialogButton width="w-[87px]">Tabs</DialogButton>
            </div>
          </div>

          <div className="mt-4">
            <GroupTitle>Browsing history</GroupTitle>
            <p className="mt-[7px] pr-3 pl-[11px]">
              Delete temporary files, history, cookies, saved passwords, and web form information.
            </p>
            <label className="mt-2 flex h-4 items-center gap-0.5 pl-[11px]">
              <input type="checkbox" className="size-[13px] appearance-none border border-[#333] bg-white" />
              Delete browsing history on exit
            </label>
            <div className="mt-[9px] flex justify-end gap-[5px] pr-px">
              <DialogButton>Delete...</DialogButton>
              <DialogButton>Settings</DialogButton>
            </div>
          </div>

          <div className="mt-1.5">
            <GroupTitle>Appearance</GroupTitle>
            <div className="mt-[7px] flex justify-between pl-[3px]">
              <DialogButton>Colors</DialogButton>
              <DialogButton>Languages</DialogButton>
              <DialogButton width="w-[78px]">Fonts</DialogButton>
              <DialogButton>Accessibility</DialogButton>
            </div>
          </div>
        </div>
      </div>

      <footer className="mt-2 flex justify-end gap-2 pr-[7px]">
        <DialogButton width="w-[73px]" primary>OK</DialogButton>
        <DialogButton width="w-[73px]">Cancel</DialogButton>
        <DialogButton width="w-[73px]" disabled>Apply</DialogButton>
      </footer>
    </section>
  );
}

/* ---------- taskbar ---------- */

function TaskButton({ label, children, state = "" }: { label: string; children: ReactNode; state?: string }) {
  return (
    <button aria-label={label} className={`flex h-full w-12 items-center justify-center ${state}`}>
      {children}
    </button>
  );
}

function Taskbar() {
  return (
    <footer className="relative flex h-10 items-center overflow-hidden bg-[#010308] text-white">
      <TaskButton label="Start">
        <svg viewBox="0 0 16 16" className="size-4" fill="#fff">
          <path d="M0 2.300L6.500 1.400V7.600H0ZM7.300 1.300L16 0V7.600H7.300ZM0 8.400H6.500V14.600L0 13.700ZM7.300 8.400H16V16L7.300 14.700Z" />
        </svg>
      </TaskButton>
      <label className="flex h-full w-[344px] items-center bg-[#333333] pr-3.5 pl-2">
        <svg viewBox="0 0 24 24" className="size-6 shrink-0" aria-hidden="true">
          <circle cx="12" cy="12" r="9" fill="none" stroke="#fff" strokeWidth="2.600" />
        </svg>
        <span className="sr-only">Search</span>
        <input
          type="text"
          placeholder="Ask me anything"
          className="ml-[5px] h-8 min-w-0 grow text-sm outline-none placeholder:text-[#9c9c9c]"
        />
        <svg viewBox="0 0 12 18" className="h-[18px] w-3" fill="none" stroke="#9c9c9c" strokeWidth="1.200" aria-hidden="true">
          <rect x="3.500" y="0.600" width="5" height="11" rx="1" />
          <path d="M0.800 8V13.500H11.200V8M6 13.500V17M3 17H9" />
        </svg>
      </label>
      <TaskButton label="Task View">
        <svg viewBox="0 0 20 16" className="h-4 w-5" fill="none" stroke="#fff" strokeWidth="1.200">
          <path d="M5 1.500H15V14.500H5ZM3 3.500H0.600V12.500H3M17 3.500H19.400V12.500H17" />
        </svg>
      </TaskButton>
      <div className="ml-[3px] flex h-full items-center gap-px">
        <TaskButton label="Microsoft Edge">
          <svg viewBox="0 0 24 24" className="size-6">
            <path
              d="M1.500 11.500C2.500 4.500 7 1 12.500 1C18.800 1 22 5.800 22 11V14H8.500C8.700 18 12 19.500 15 19.500C17.500 19.500 19.500 18.800 21 17.900V22C19.300 23 17 23.500 14.200 23.500C8 23.500 4.200 19.500 4.200 14.800C4.200 11 6.300 8 9.500 6.700C5.800 6.900 3.200 8.800 1.500 11.500ZM8.700 10.300H16.600C16.600 7.800 15.200 6 12.800 6C10.300 6 8.900 8 8.700 10.300Z"
              fill="#0a7ad8"
            />
          </svg>
        </TaskButton>
        <TaskButton label="File Explorer">
          <svg viewBox="0 0 24 20" className="h-5 w-6">
            <path d="M1 1H9L11 3H22V18H1Z" fill="#f3c84b" />
            <path d="M1 4H23V18.500H1Z" fill="#fde08a" />
            <path d="M4 19.500V11.500H20V19.500H16V15H8V19.500Z" fill="#45a6d5" />
          </svg>
        </TaskButton>
        <TaskButton label="Store">
          <svg viewBox="0 0 22 24" className="h-6 w-[22px]">
            <path d="M7 7V4A3 3 0 0 1 13 3V6M10 5A3 3 0 0 1 16 4V6" fill="none" stroke="#fff" strokeWidth="1.300" />
            <path d="M1 7L21 5.500V24L1 21.500Z" fill="#fff" />
            <path d="M5 10.500L9.700 10V14H5ZM10.700 9.900L16.500 9.300V14H10.700ZM5 15H9.700V19.200L5 18.700ZM10.700 15H16.500V19.900L10.700 19.300Z" fill="#010308" />
          </svg>
        </TaskButton>
        <TaskButton label="Control Panel" state="relative after:absolute after:inset-x-1 after:bottom-0 after:h-0.5 after:bg-[#76b9ed]">
          <ControlPanelGlyph className="h-4 w-[21px]" />
        </TaskButton>
        <TaskButton label="Internet Properties" state="border-b-2 border-[#76b9ed] bg-[#33363a]">
          <Svg size="size-6">
            <Globe cx={13} cy={14} r={13} />
            <CheckSheet x={10} y={14} w={22} h={18} />
          </Svg>
        </TaskButton>
      </div>

      <div className="ml-auto flex h-full items-center">
        <button aria-label="Show hidden icons" className="mr-2.5">
          <svg viewBox="0 0 14 8" className="h-2 w-3.5" fill="none" stroke="#fff" strokeWidth="1.300">
            <path d="M1 7L7 1L13 7" />
          </svg>
        </button>
        <button aria-label="Network" className="mr-2">
          <svg viewBox="0 0 16 14" className="h-3.5 w-4" fill="none" stroke="#fff" strokeWidth="1.200">
            <path d="M5 1.500H15.400V9.500H3V6M9 9.500V12.500M5.500 12.800H12.500M0.600 0.800H4.400V4.800H0.600ZM2.500 5V7" />
          </svg>
        </button>
        <button aria-label="Volume" className="mr-2.5">
          <svg viewBox="0 0 16 14" className="h-3.5 w-4" fill="none" stroke="#fff" strokeWidth="1.200">
            <path d="M0.600 4.800H3L6.500 1.500V12.500L3 9.200H0.600ZM9 5C10 6.200 10 7.800 9 9M11.300 3.500C13 5.500 13 8.500 11.300 10.500M13.500 1.800C16 4.800 16 9.200 13.500 12.200" />
          </svg>
        </button>
        <div className="w-[54px] text-center text-xs leading-[18px] whitespace-nowrap">
          <p>9:32 AM</p>
          <p>7/30/2016</p>
        </div>
        <button aria-label="Action Center" className="ml-4 flex h-full w-10 items-center border-r border-[#5b5d60]">
          <svg viewBox="0 0 18 16" className="h-4 w-[18px]" fill="none" stroke="#fff" strokeWidth="1.200">
            <path d="M1 1H17V12H11.500L9 14.800L6.500 12H1Z" />
          </svg>
        </button>
        <span className="w-1" />
      </div>

      <div className="pointer-events-none absolute top-0 right-[24px] flex h-full items-start text-[#a2a4a6]">
        <svg viewBox="0 0 52 40" className="h-10 w-[52px]" aria-hidden="true">
          <path d="M13 0H46L33 27C31 30 28 31 24 30L1 22C0 16 3 15 5 11Z" fill="#a4a5a7" />
          <path d="M1 22C2 28 4 28 8 30L27 36C31 37 33 35 35 31L49 6C51 10 50 13 48 16L34 34C32 37 30 38 26 38L6 30C2 28 0 26 1 22Z" fill="#96979a" />
          <path d="M2 22L25 30C29 31 32 30 34 26L48 4L49 8L36 31C34 35 31 36 27 35L6 28C3 27 1 25 2 22Z" fill="#010308" />
          <path d="M4 24L26 31C30 32 33 31 35 27L48 7L48 9L35 31C33 34 31 35 27 34L7 28C5 27 4 26 4 24Z" fill="#a4a5a7" />
          <path d="M21 2L38 6L36 9L20 4Z" fill="#010308" />
        </svg>
        <span className="pt-0.5 pl-[11px] text-lg leading-[26px] text-[#7d7f82]">The Collection Book</span>
      </div>
    </footer>
  );
}

/* ---------- page ---------- */

export default function App() {
  return (
    <div className="relative flex min-h-screen flex-col bg-white font-['Open_Sans','Noto_Sans',sans-serif]">
      <Gradients />
      <TitleBar />
      <NavBar />
      <main className="grow">
        <div className="flex items-center pt-[26px] pr-[85px] pl-[17px] text-[11px]">
          <h2 className="grow text-base leading-[24px] text-[#123e97]">Adjust your computer’s settings</h2>
          <span className="text-[#5d6678]">View by:</span>
          <button className="ml-3.5 flex items-center gap-1.5 text-[#1556b0]">
            Large icons
            <svg viewBox="0 0 8 5" className="h-[5px] w-2" fill="#1556b0" aria-hidden="true">
              <path d="M0 0H8L4 4.500Z" />
            </svg>
          </button>
        </div>
        <div className="mx-2 mt-[17px] h-px bg-linear-to-r from-transparent via-[#d5dfe5] via-5% to-[#d5dfe5]" />
        <div className="mt-6 flex pl-[15px]">
          {columns.map((items, i) => (
            <ul key={i} className="w-[250px] shrink-0">
              {items.map((item) => (
                <PanelItem key={item.name} item={item} />
              ))}
            </ul>
          ))}
        </div>
      </main>
      <Taskbar />
      <InternetProperties />
    </div>
  );
}
